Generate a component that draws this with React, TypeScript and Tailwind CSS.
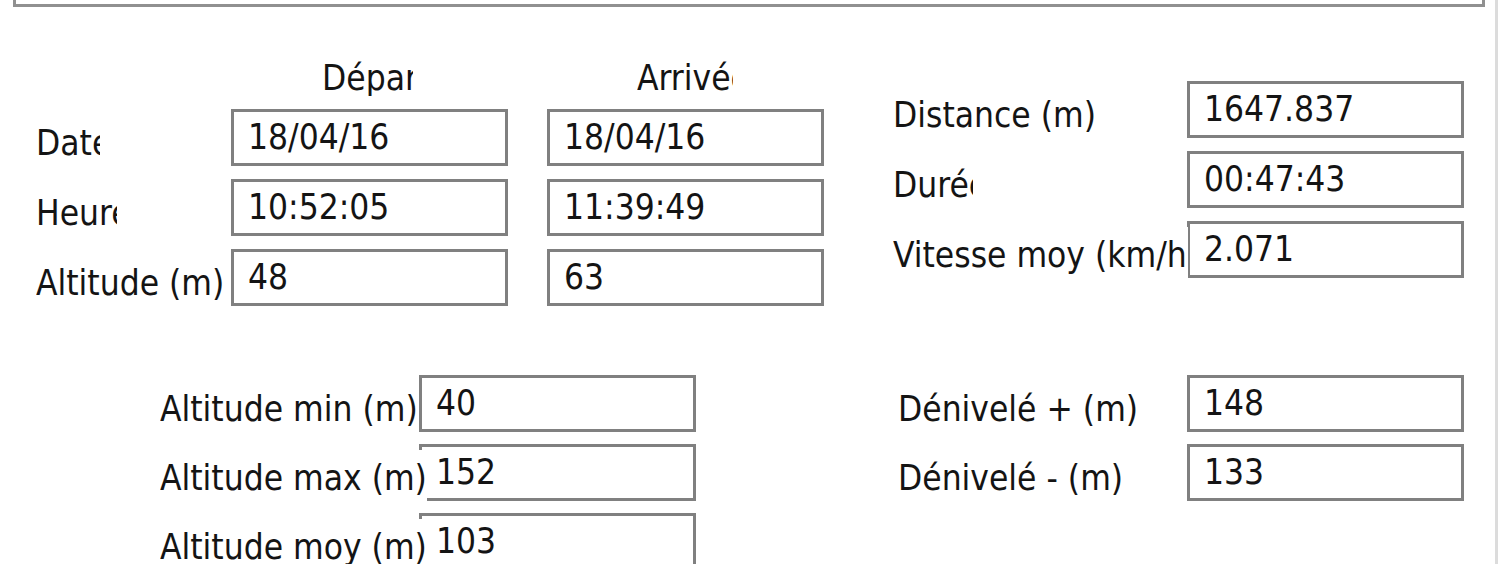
const font = { fontFamily: '"DejaVu Sans Condensed", "DejaVu Sans", sans-serif' };

function Field({ value }: { value: string }) {
  return (
    <div className="flex h-[57px] w-[277px] shrink-0 items-center border-[3px] border-[#808080] bg-white pl-[14px] text-[35px] leading-none text-[#141414]">
      {value}
    </div>
  );
}

// label shown in a fixed-size box, clipped like the WinForms original
function Label({ text, col, clip }: { text: string; col: number; clip?: number }) {
  return (
    <div className="relative z-10 h-[57px] shrink-0" style={{ width: col }}>
      <div
        className="flex h-[57px] translate-y-[6px] items-center overflow-hidden whitespace-nowrap bg-white text-[35px] leading-none text-[#141414]"
        style={clip ? { width: clip } : { width: "max-content" }}
      >
        {text}
      </div>
    </div>
  );
}

function Row({ label, col, clip, values }: { label: string; col: number; clip?: number; values: string[] }) {
  return (
    <div className="flex h-[57px]">
      <Label text={label} col={col} clip={clip} />
      <div className="flex gap-[39px]">
        {values.map((v, i) => (
          <Field key={i} value={v} />
        ))}
      </div>
    </div>
  );
}

export default function App() {
  return (
    <div className="flex h-[564px] w-[1500px] overflow-hidden bg-white" style={font}>
      <div className="flex w-[1495px] shrink-0 flex-col">
        <div className="ml-[13px] h-[7px] w-[1472px] shrink-0 border-x-[3px] border-b-[3px] border-[#909090]" />

        <div className="flex shrink-0">
          {/* start / end */}
          <div className="ml-[36px] flex flex-col pt-[54px]">
            <div className="mb-[14px] flex h-[34px] items-center text-[35px] leading-none text-[#141414]">
              <div className="w-[195px] shrink-0" />
              <div className="w-[277px] shrink-0 pl-[91px]">
                <div className="w-[91px] overflow-hidden whitespace-nowrap">Départ</div>
              </div>
              <div className="ml-[39px] w-[277px] shrink-0 pl-[90px]">
                <div className="w-[96px] overflow-hidden whitespace-nowrap">Arrivée</div>
              </div>
            </div>
            <div className="flex flex-col gap-[13px]">
              <Row label="Date" col={195} clip={64} values={["18/04/16", "18/04/16"]} />
              <Row label="Heure" col={195} clip={81} values={["10:52:05", "11:39:49"]} />
              <Row label="Altitude (m)" col={195} values={["48", "63"]} />
            </div>
          </div>

          {/* totals */}
          <div className="ml-[69px] flex flex-col gap-[13px] pt-[74px]">
            <Row label="Distance (m)" col={294} values={["1647.837"]} />
            <Row label="Durée" col={294} clip={80} values={["00:47:43"]} />
            <Row label="Vitesse moy (km/h)" col={294} clip={295} values={["2.071"]} />
          </div>
        </div>

        <div className="mt-[69px] flex shrink-0">
          <div className="ml-[160px] flex flex-col gap-[12px]">
            <Row label="Altitude min (m)" col={259} values={["40"]} />
            <Row label="Altitude max (m)" col={259} values={["152"]} />
            <Row label="Altitude moy (m)" col={259} values={["103"]} />
          </div>
          <div className="ml-[202px] flex flex-col gap-[12px]">
            <Row label="Dénivelé + (m)" col={289} values={["148"]} />
            <Row label="Dénivelé - (m)" col={289} values={["133"]} />
          </div>
        </div>
      </div>
      <div className="h-full w-[3px] shrink-0 bg-[#dcdcdc]" />
    </div>
  );
}
